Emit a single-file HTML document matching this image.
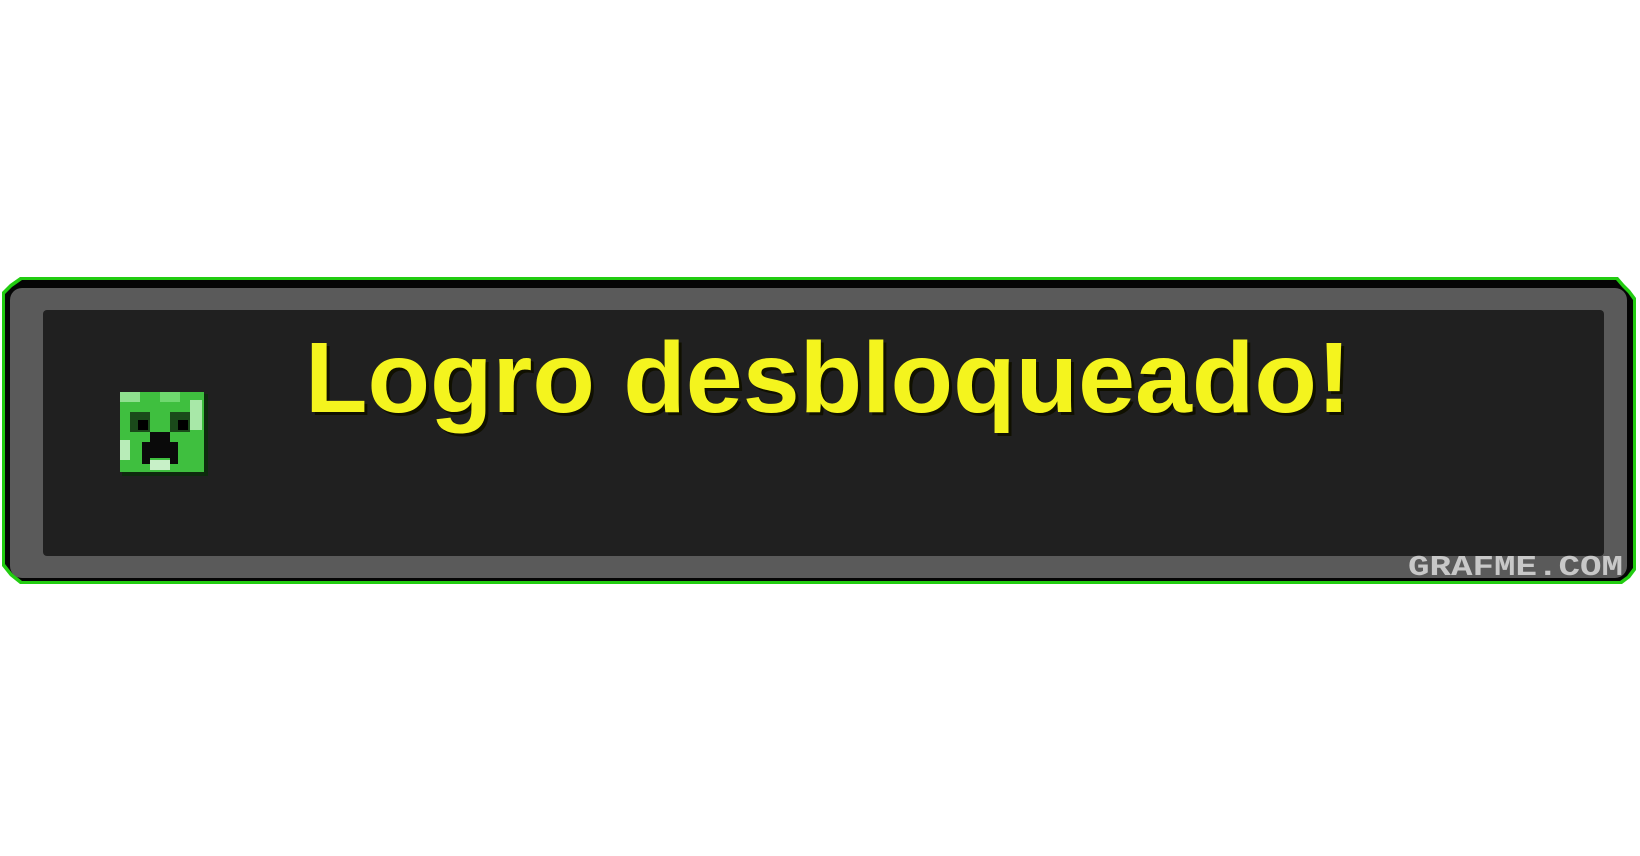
<!DOCTYPE html>
<html><head><style>
html,body{margin:0;padding:0;background:#fff;width:1640px;height:856px;overflow:hidden}
</style></head><body>
<svg width="1640" height="856" viewBox="0 0 1640 856" xmlns="http://www.w3.org/2000/svg">
<polygon points="20,277 1618,277 1624,284 1630,290 1636,298 1636,570 1630,578 1622,584 20,584 10,576 2,566 2,292 10,284" fill="#22cc11"/>
<polygon points="22,280 1616,280 1622,287 1628,293 1633,300 1633,568 1627,576 1620,581 22,581 12,573 5,564 5,294 12,287" fill="#050505"/>
<rect x="10" y="288" width="1617" height="290" rx="12" fill="#5a5a5a"/>
<rect x="43" y="310" width="1561" height="246" rx="4" fill="#202020"/>
<g>
<rect x="122" y="394" width="86" height="82" fill="#0d2a0d"/>
<rect x="120" y="392" width="84" height="80" fill="#3fbf3f"/>
<rect x="120" y="392" width="20" height="10" fill="#8fe08f"/>
<rect x="160" y="392" width="20" height="10" fill="#6fd86f"/>
<rect x="190" y="400" width="12" height="30" fill="#a8e8a8"/>
<rect x="120" y="440" width="10" height="20" fill="#b8ecb8"/>
<rect x="150" y="460" width="20" height="10" fill="#c8f0c8"/>
<rect x="130" y="412" width="20" height="20" fill="#1a4a1a"/>
<rect x="170" y="412" width="20" height="20" fill="#1a4a1a"/>
<rect x="138" y="420" width="10" height="10" fill="#000"/>
<rect x="178" y="420" width="10" height="10" fill="#000"/>
<rect x="150" y="432" width="20" height="12" fill="#0a0a0a"/>
<rect x="142" y="442" width="36" height="16" fill="#0a0a0a"/>
<rect x="142" y="456" width="8" height="8" fill="#0a0a0a"/>
<rect x="170" y="456" width="8" height="8" fill="#0a0a0a"/>
</g>
<text x="305" y="412" font-family="'Liberation Sans',sans-serif" font-weight="bold" font-size="100" fill="#101000" textLength="1046" lengthAdjust="spacingAndGlyphs" transform="translate(3,3)">Logro desbloqueado!</text>
<text x="305" y="412" font-family="'Liberation Sans',sans-serif" font-weight="bold" font-size="100" fill="#f4f41e" textLength="1046" lengthAdjust="spacingAndGlyphs">Logro desbloqueado!</text>
<text x="1408" y="575" font-family="'Liberation Mono',monospace" font-weight="bold" font-size="29" fill="#c8c8c8" textLength="215" lengthAdjust="spacingAndGlyphs">GRAFME.COM</text>
</svg>
</body></html>
